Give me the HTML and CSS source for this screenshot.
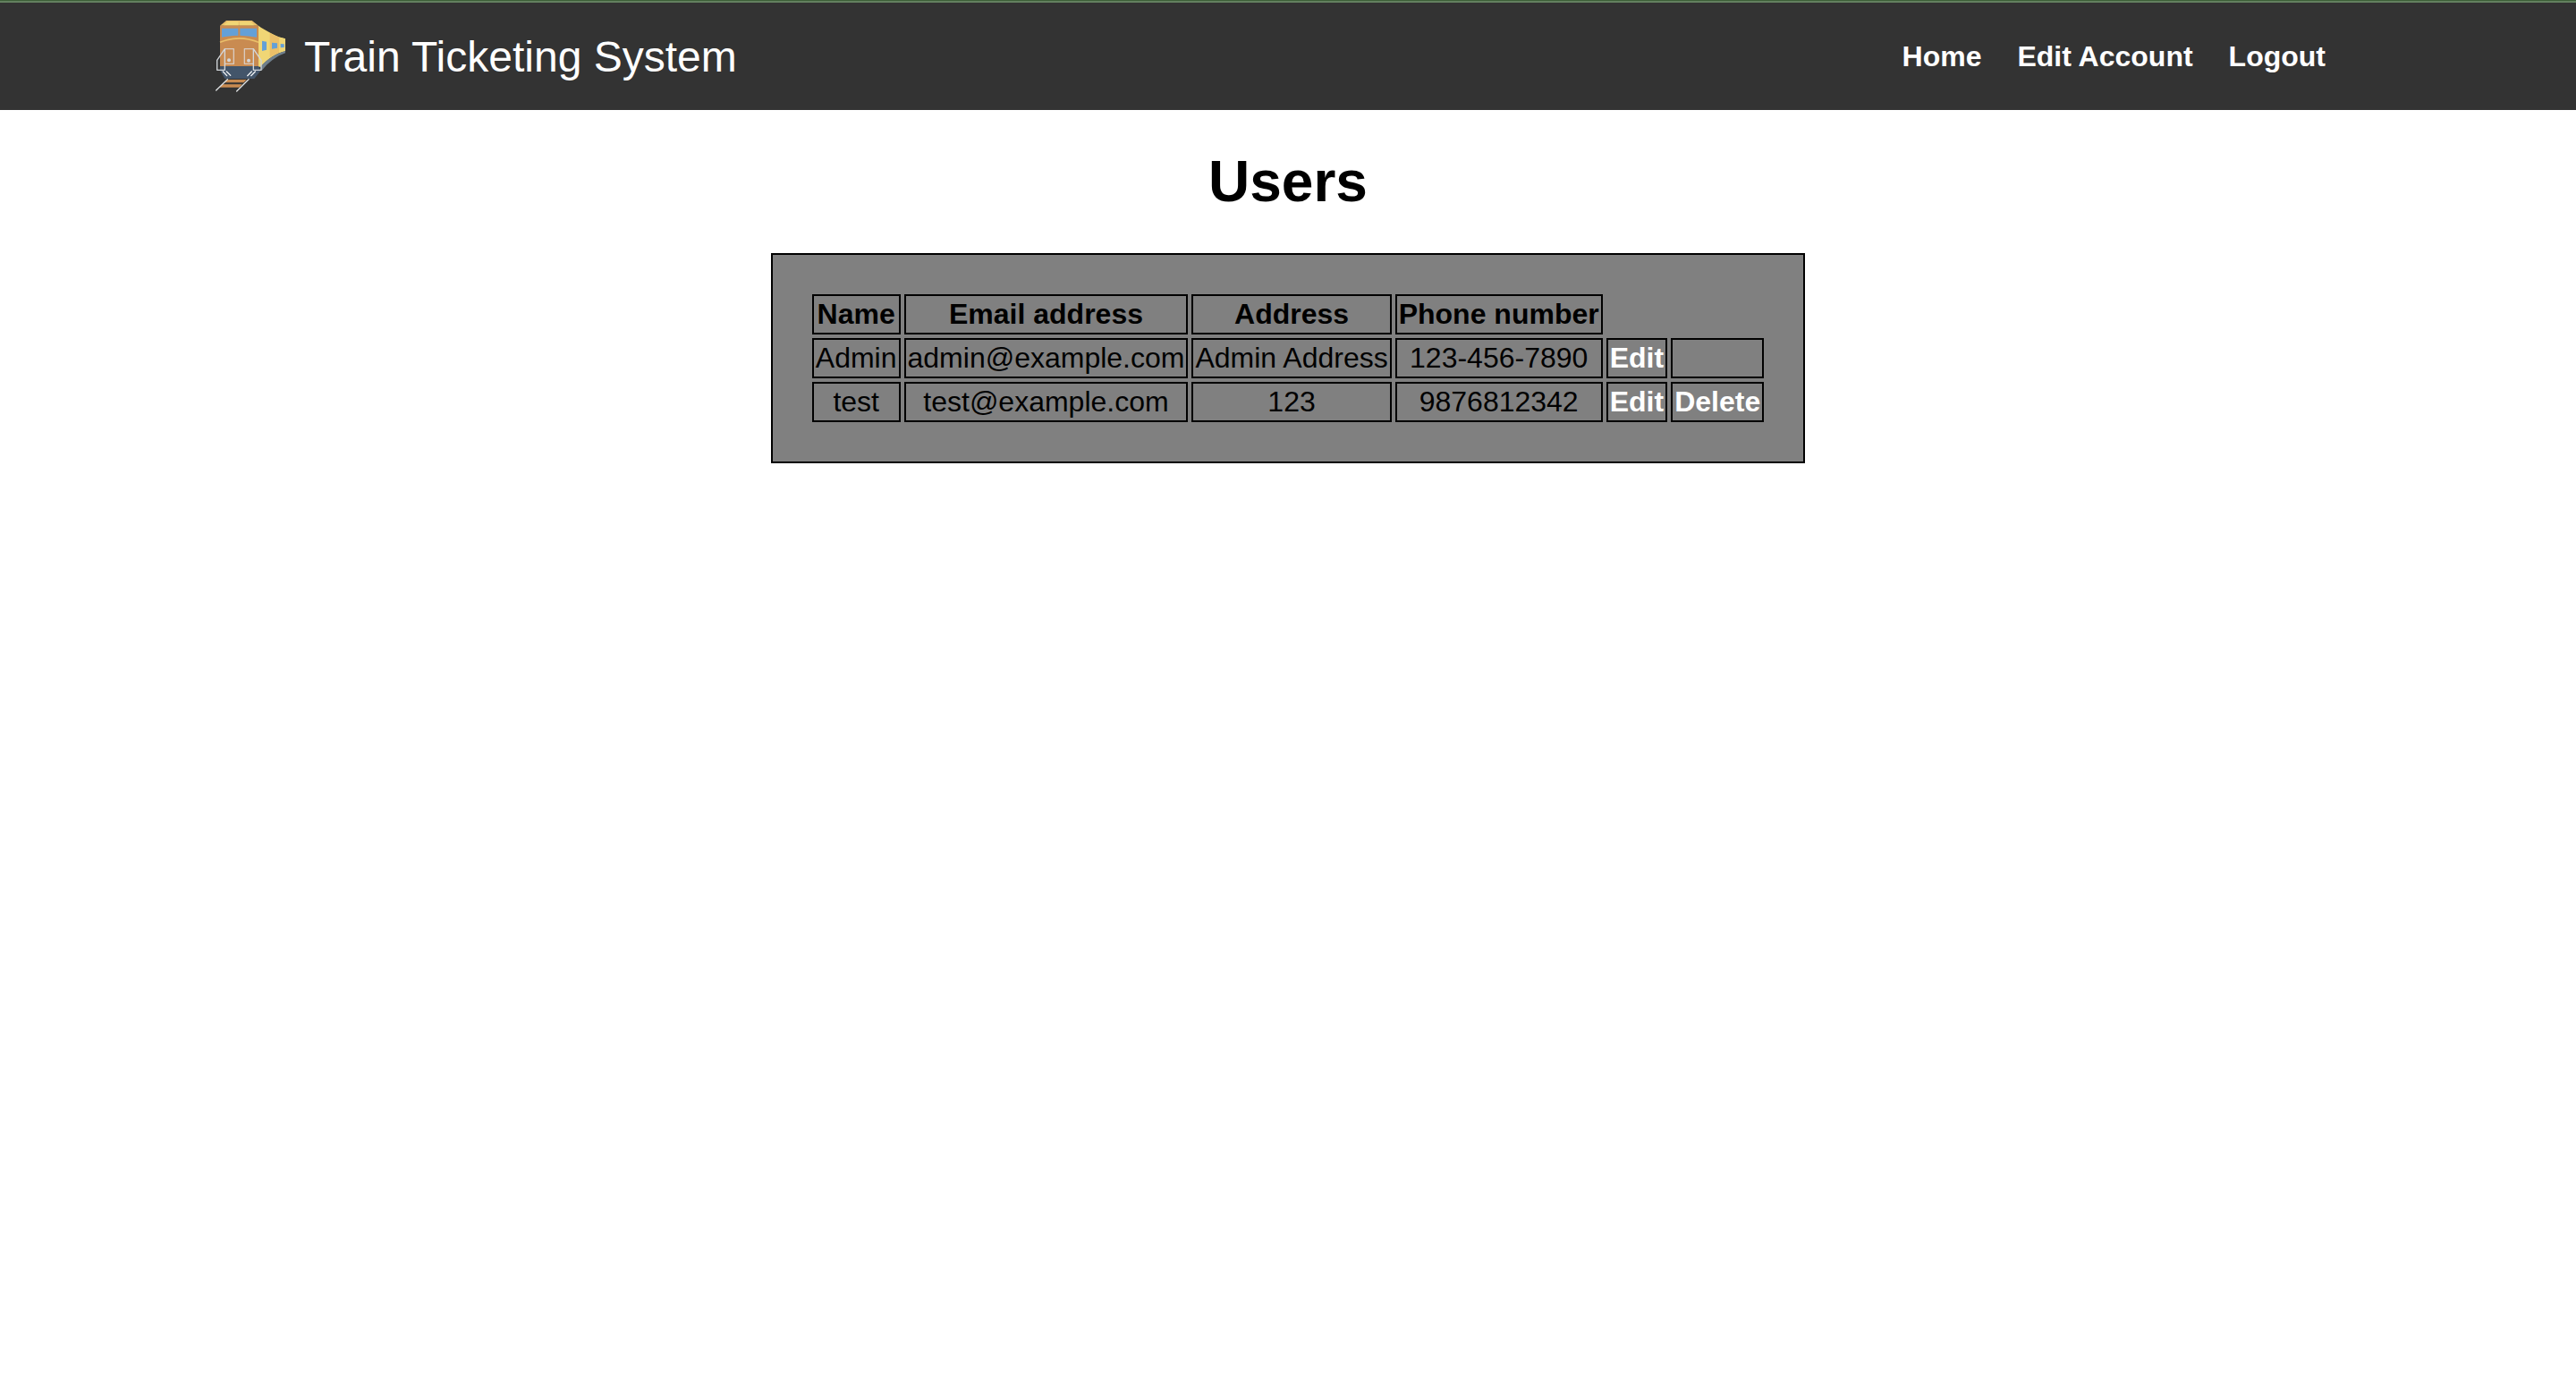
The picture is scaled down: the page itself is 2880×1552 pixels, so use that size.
FILE: index.html
```html
<!DOCTYPE html>
<html lang="en">
<head>
<meta charset="utf-8">
<title>Train Ticketing System</title>
<link rel="stylesheet" href="styles.css">
</head>
<body>
<header class="site-header">
  <div class="container">
    <div class="brand">
      <svg class="logo" viewBox="30 39 240 240" aria-hidden="true">
        <path fill="#f0d675" d="M177 56C199 72 217 80 245 94L267 100V141C235 149 205 170 185 194L177 194Z"/>
        <path fill="#eabf69" d="M215 80C226 86 235 90 247 95V146L215 161Z"/>
        <path fill="#f0d675" d="M247 95L267 100V141L247 146Z"/>
        <path fill="#6f7f8c" d="M267 141V148C238 158 211 178 187 208L185 192C205 170 235 149 267 141Z"/>
        <path fill="#64a0d7" d="M189 107L204 110V137L189 141ZM222 113L240 115V131L222 134ZM251 117L263 118V129L251 130Z"/>
        <path fill="#eabf69" d="M69 39H155L177 56H48Z"/>
        <path fill="#f0d675" d="M74 43H110V55H60ZM114 43H150L163 55H114Z"/>
        <path fill="#c98b51" d="M48 56H177V194H48Z"/>
        <path fill="#64a0d7" d="M54 65H109V89Q80 90 54 95ZM115 65H171V95Q145 90 115 89Z"/>
        <path fill="none" stroke="#eabf69" stroke-width="5" d="M48 112Q112 85 177 112"/>
        <path fill="#43556a" d="M48 192H177L185 206L163 234H64L48 206Z"/>
        <path fill="#c98b51" d="M70 237H137L128 247H61ZM55 253H122L113 263H47Z"/>
        <g fill="none" stroke="#d9cbc0" stroke-width="4" stroke-linejoin="round">
          <path d="M64 134H94V184H65M160 134H130V184H160"/>
          <path stroke="#d3d7db" d="M64 134L38 172V205H64ZM160 134L186 172V205H160Z"/>
        </g>
        <g fill="#d3d7db"><circle cx="78" cy="172" r="6"/><circle cx="144" cy="173" r="6"/></g>
        <g fill="none" stroke="#eef1f3" stroke-width="4" stroke-linecap="round">
          <path d="M58 210L71 224M70 210L83 223M154 210L140 224M166 210L152 224"/>
          <path stroke="#dde0e2" d="M73 236L35 273M144 236L104 276"/>
        </g>
      </svg>
      <span class="brand-name">Train Ticketing System</span>
    </div>
    <nav class="nav">
      <a href="#">Home</a>
      <a href="#">Edit Account</a>
      <a href="#">Logout</a>
    </nav>
  </div>
</header>
<main class="content">
  <h1>Users</h1>
  <div class="panel">
    <table class="users">
      <thead>
        <tr><th>Name</th><th>Email address</th><th>Address</th><th>Phone number</th></tr>
      </thead>
      <tbody>
        <tr><td>Admin</td><td>admin@example.com</td><td>Admin Address</td><td>123-456-7890</td><td><a href="#">Edit</a></td><td></td></tr>
        <tr><td>test</td><td>test@example.com</td><td>123</td><td>9876812342</td><td><a href="#">Edit</a></td><td><a href="#">Delete</a></td></tr>
      </tbody>
    </table>
  </div>
</main>
</body>
</html>
```

FILE: styles.css
```css
body {
  margin: 0;
  border-top: 1px solid #3d5f38;
  background: #fff;
  color: #000;
  font-family: "Liberation Sans", Arial, sans-serif;
  font-size: 32px;
}

a {
  color: #fff;
  font-weight: bold;
  text-decoration: none;
}

.site-header {
  padding: 20px;
  border-top: 2px solid #63805f;
  background: #333;
  color: #fff;
}

.container {
  display: flex;
  align-items: center;
  justify-content: space-between;
  max-width: 2400px;
  margin: 0 auto;
}

.brand {
  display: flex;
  align-items: center;
  gap: 20px;
}

.logo {
  width: 80px;
  height: 80px;
}

.brand-name {
  font-size: 48px;
}

.nav {
  display: flex;
  gap: 40px;
  padding-right: 40px;
}

.content {
  display: flex;
  flex-direction: column;
  align-items: center;
}

h1 {
  margin: 43px 0;
  font-size: 64px;
}

.panel {
  padding: 40px;
  border: 2px solid #000;
  background: #808080;
}

.users {
  border-spacing: 4px;
  text-align: center;
}

.users th,
.users td {
  padding: 2px;
  border: 2px solid #000;
}
```
